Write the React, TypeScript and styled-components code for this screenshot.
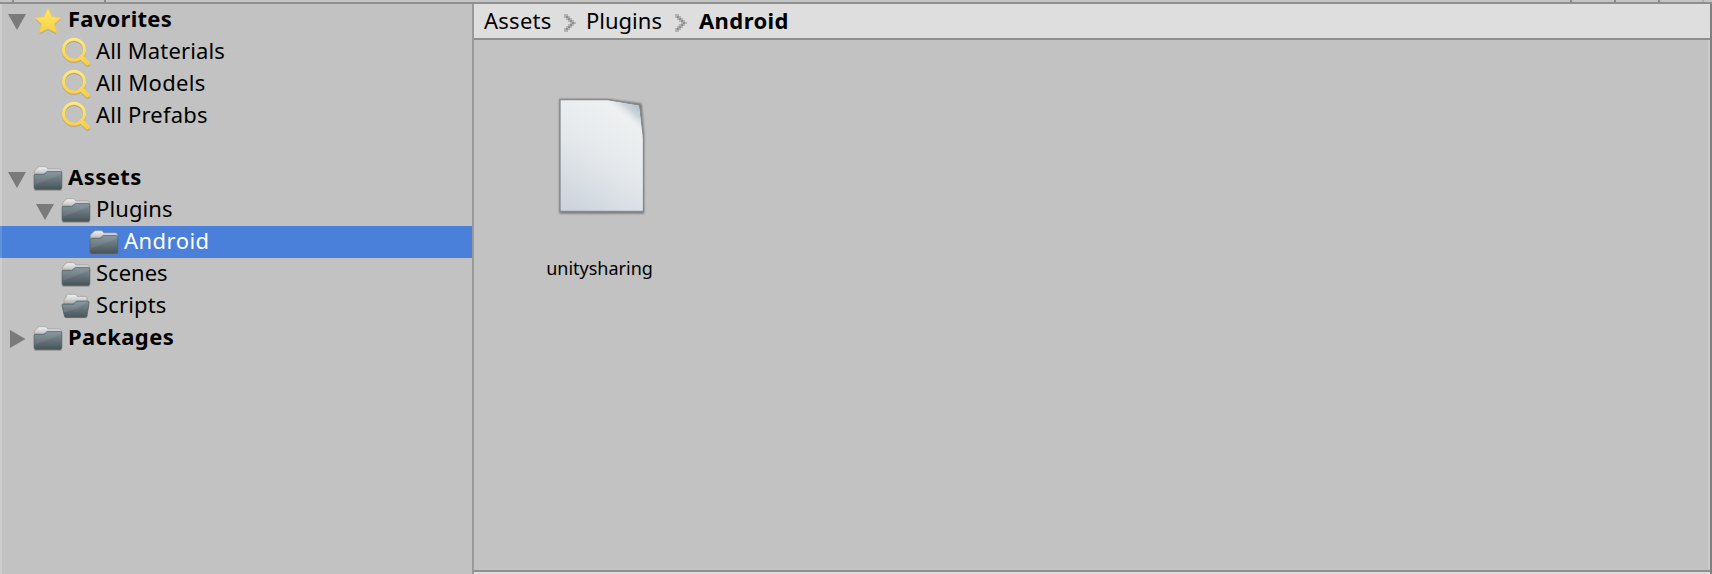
import React from "react";
import styled, { createGlobalStyle } from "styled-components";

const GlobalStyle = createGlobalStyle`
  * { box-sizing: border-box; }
  html, body { margin: 0; padding: 0; background: #c2c2c2; overflow: hidden; }
`;

const Window = styled.div`
  width: 1712px;
  height: 574px;
  display: flex;
  flex-direction: column;
  background: #c2c2c2;
  color: #000;
  font-family: "Noto Sans", "Open Sans", sans-serif;
  font-size: 22px;
`;

const ToolbarEdge = styled.div`
  flex: 0 0 4px;
  display: flex;
  border-bottom: 2px solid #8f8f8f;
  background: #c4c4c4;
`;

const Tick = styled.i<{ $gap: number; $color?: string }>`
  width: 2px;
  height: 2px;
  margin-left: ${(p) => p.$gap}px;
  background: ${(p) => p.$color ?? "#8a8a8a"};
`;

const Body = styled.div`
  flex: 1;
  min-height: 0;
  display: flex;
`;

const Sidebar = styled.nav`
  width: 474px;
  border-right: 2px solid #999;
  background: linear-gradient(to right, #cecece 2px, #c2c2c2 2px);
`;

const Row = styled.div<{ $depth: number; $selected?: boolean; $spaced?: boolean }>`
  height: 32px;
  display: flex;
  align-items: center;
  margin-top: ${(p) => (p.$spaced ? 30 : 0)}px;
  padding-left: ${(p) => 5 + p.$depth * 28}px;
  background: ${(p) =>
    p.$selected ? "linear-gradient(to right, #6392dd 2px, #4a80d9 2px)" : "transparent"};
  color: ${(p) => (p.$selected ? "#fff" : "#000")};
`;

const Slot = styled.span<{ $w: number }>`
  flex: 0 0 ${(p) => p.$w}px;
  height: 32px;
  display: block;
  svg { display: block; }
`;

const Label = styled.span<{ $bold?: boolean; $track?: number }>`
  line-height: 28px;
  height: 32px;
  white-space: nowrap;
  font-weight: ${(p) => (p.$bold ? 700 : 400)};
  letter-spacing: ${(p) => p.$track ?? 0}px;
`;

const Main = styled.main`
  flex: 1;
  display: flex;
  flex-direction: column;
`;

const Breadcrumbs = styled.header`
  flex: 0 0 36px;
  display: flex;
  padding-left: 10px;
  background: #dedede;
  border-bottom: 2px solid #8f8f8f;
`;

const Crumb = styled(Label)<{ $w: number }>`
  width: ${(p) => p.$w}px;
  line-height: 32px;
`;

const ChevronSlot = styled.span<{ $w: number }>`
  width: ${(p) => p.$w}px;
  padding-top: 10px;
  svg { display: block; }
`;

const Grid = styled.section`
  flex: 1;
  padding: 57px 0 0 44px;
  border-right: 2px solid #cacaca;
`;

const Asset = styled.figure`
  margin: 0;
  width: 164px;
  display: flex;
  flex-direction: column;
  align-items: center;
`;

const AssetName = styled.figcaption`
  margin-top: 38px;
  padding-right: 1px;
  font-size: 18px;
  line-height: 26px;
`;

const Footer = styled.footer`
  flex: 0 0 4px;
  border-top: 2px solid #8f8f8f;
  background: #dedede;
`;

const RightEdge = styled.div`
  width: 2px;
  background: #808080;
`;

const Arrow = ({ open }: { open: boolean }) => (
  <svg width="24" height="32">
    <path d={open ? "M3 10H21L12 26Z" : "M5 8V26L20.5 17Z"} fill="#7a7a7a" />
  </svg>
);

const Star = () => (
  <svg width="34" height="32" viewBox="-1 0 34 32">
    <defs>
      <linearGradient id="star" x2="0" y2="1">
        <stop offset="0" stopColor="#ffe870" />
        <stop offset="1" stopColor="#f9d03e" />
      </linearGradient>
    </defs>
    <path
      d="M14 4.8L18 13.2L27 14.2L20.3 20.5L22.5 29.5L14 25L5.3 29.5L7.5 20.5L1 14.2L10 13.2Z"
      fill="#777" opacity=".35" transform="translate(0 .9)"
    />
    <path
      d="M14 4L18 12.7L27.2 13.7L20.5 20L22.8 29L14 24.8L5.2 29L7.5 20L.8 13.7L10 12.7Z"
      fill="url(#star)" stroke="#efc84a" strokeWidth=".7" strokeLinejoin="round"
    />
  </svg>
);

const Magnifier = () => (
  <svg width="34" height="32" fill="none">
    <defs>
      <linearGradient id="glass" x1="0" y1="0" x2="0" y2="32" gradientUnits="userSpaceOnUse">
        <stop offset="0" stopColor="#ffeb85" />
        <stop offset="1" stopColor="#facb30" />
      </linearGradient>
    </defs>
    <g stroke="#8c7a40" opacity=".4" transform="translate(0 .8)">
      <circle cx="13" cy="14" r="10.5" strokeWidth="3.2" />
      <path d="M20.5 21.5L26.5 27.5" strokeWidth="5" strokeLinecap="round" />
    </g>
    <g stroke="url(#glass)">
      <circle cx="13" cy="13.7" r="10.5" strokeWidth="3" />
      <path d="M20.6 21.5L26.5 27.4" strokeWidth="4.6" strokeLinecap="round" />
    </g>
  </svg>
);

const Folder = ({ open = false }: { open?: boolean }) => (
  <svg width="34" height="32">
    <defs>
      <linearGradient id="folder" x2="0" y2="1">
        <stop offset="0" stopColor="#82929a" />
        <stop offset=".5" stopColor="#65737a" />
        <stop offset="1" stopColor="#48545a" />
      </linearGradient>
      <linearGradient id="tab" x2="0" y2="1">
        <stop offset="0" stopColor="#f4f4f4" />
        <stop offset=".5" stopColor="#d0d0d0" />
        <stop offset="1" stopColor="#9d9d9d" />
      </linearGradient>
    </defs>
    {open ? (
      <>
        <path
          d="M3 15V10Q3 8.5 4.5 8.3L6 5.2Q6.4 4.3 7.4 4.3H14Q15 4.3 15.5 5.2L16.3 6.4H24Q26 6.5 26 8V14Z"
          fill="url(#tab)" stroke="#999" strokeWidth=".7"
        />
        <path
          d="M2.6 14H12.5L15.5 11H26Q28.4 11 28.1 12.7L26 26Q25.8 27.6 24.3 27.6H5.2Q3.7 27.6 3.4 26L1 15.3Q.9 14 2.6 14Z"
          fill="url(#folder)" stroke="#505c62" strokeWidth=".7"
        />
        <path d="M2.2 15H12.9L15.9 12H27L15 19L3 22.2Z" fill="#fff" opacity=".09" />
      </>
    ) : (
      <g transform="translate(.4 .5)">
        <path d="M1 27.6H28.2" stroke="#777" opacity=".5" strokeWidth="1.6" />
        <path
          d="M1 14V9.3Q1 7.4 2.8 6.8L4.6 5Q5.3 4.2 6.5 4.2H11.7Q12.7 4.2 13.3 5L14.4 6.4H26Q28 6.4 28.2 8.4V13Z"
          fill="url(#tab)" stroke="#999" strokeWidth=".7"
        />
        <path
          d="M.7 13.3Q.7 11.8 2.2 11.8H10.5L13.9 8.9H27Q28.4 8.9 28.4 10.4V25.2Q28.4 27 26.6 27H2.5Q.7 27 .7 25.2Z"
          fill="url(#folder)" stroke="#505c62" strokeWidth=".7"
        />
        <path d="M1 12.8H11L14.3 9.8H28.1V12L1 22.5Z" fill="#fff" opacity=".07" />
      </g>
    )}
  </svg>
);

const Chevron = () => (
  <svg width="12" height="18" fill="none" shapeRendering="crispEdges">
    <path
      d="M0 0H4V2H6V4H8V6H10V8H12V10H10V12H8V14H6V16H4V18H0V14H2V12H4V10H6V8H4V6H2V4H0Z"
      fill="#b3b3b3"
    />
    <path d="M2 2H4V4H6V6H8V8H10V10H8V12H6V14H4V16H2V14H4V12H6V10H8V8H6V6H4V4H2Z" fill="#8f8f8f" />
  </svg>
);

const Page = () => (
  <svg width="92" height="120" viewBox="-1.5 0 92 120">
    <defs>
      <linearGradient id="paper" x1="70" y1="20" x2="10" y2="114" gradientUnits="userSpaceOnUse">
        <stop offset="0" stopColor="#eff1f2" />
        <stop offset=".45" stopColor="#e5e9ec" />
        <stop offset="1" stopColor="#ccd4dd" />
      </linearGradient>
      <linearGradient id="curl" x1="83" y1="8" x2="70" y2="23" gradientUnits="userSpaceOnUse">
        <stop offset="0" stopColor="#b3bfc8" />
        <stop offset=".45" stopColor="#ccd4da" />
        <stop offset="1" stopColor="#edf0f2" stopOpacity="0" />
      </linearGradient>
      <filter id="soft" x="-10%" y="-10%" width="120%" height="125%">
        <feGaussianBlur stdDeviation="1.3" />
      </filter>
    </defs>
    <path d="M4 8H54L86 12L88.5 44V122H4Z" transform="translate(0 -5.5)" fill="#555" opacity=".75" filter="url(#soft)" />
    <path d="M4.5 7.5H52L84 13.2L88 46V119.5H4.5Z" transform="translate(0 -5)" fill="url(#paper)" stroke="#868b8e" strokeWidth="1.3" />
    <path d="M50 3.2L83.4 8.8L87.2 40Q80 25 50 3.2Z" fill="url(#curl)" />
  </svg>
);

type Item = {
  name: string;
  depth: number;
  icon: "star" | "search" | "folder" | "openFolder";
  arrow?: "open" | "closed";
  bold?: boolean;
  selected?: boolean;
  spaced?: boolean;
  track?: number;
};

const items: Item[] = [
  { name: "Favorites", depth: 0, icon: "star", arrow: "open", bold: true, track: 0.25 },
  { name: "All Materials", depth: 1, icon: "search", track: 0.15 },
  { name: "All Models", depth: 1, icon: "search", track: 0.3 },
  { name: "All Prefabs", depth: 1, icon: "search", track: 0.2 },
  { name: "Assets", depth: 0, icon: "folder", arrow: "open", bold: true, spaced: true, track: 0.45 },
  { name: "Plugins", depth: 1, icon: "folder", arrow: "open", track: 0.1 },
  { name: "Android", depth: 2, icon: "folder", selected: true, track: 0.45 },
  { name: "Scenes", depth: 1, icon: "folder" },
  { name: "Scripts", depth: 1, icon: "openFolder", track: 0.15 },
  { name: "Packages", depth: 0, icon: "folder", arrow: "closed", bold: true, track: 0.37 },
];

const icons = {
  star: <Star />,
  search: <Magnifier />,
  folder: <Folder />,
  openFolder: <Folder open />,
};

export default function App() {
  return (
    <Window>
      <GlobalStyle />
      <ToolbarEdge>
        <Tick $gap={12} />
        <Tick $gap={90} />
        <Tick $gap={1464} />
        <Tick $gap={42} />
        <Tick $gap={42} />
        <Tick $gap={42} $color="#adadad" />
      </ToolbarEdge>
      <Body>
        <Sidebar>
          {items.map((it) => (
            <Row key={it.name} $depth={it.depth} $selected={it.selected} $spaced={it.spaced}>
              <Slot $w={28}>{it.arrow && <Arrow open={it.arrow === "open"} />}</Slot>
              <Slot $w={35}>{icons[it.icon]}</Slot>
              <Label $bold={it.bold} $track={it.track}>{it.name}</Label>
            </Row>
          ))}
        </Sidebar>
        <Main>
          <Breadcrumbs>
            <Crumb $w={80} $track={0.25}>Assets</Crumb>
            <ChevronSlot $w={22}><Chevron /></ChevronSlot>
            <Crumb $w={89}>Plugins</Crumb>
            <ChevronSlot $w={24}><Chevron /></ChevronSlot>
            <Crumb $w={100} $bold $track={0.4}>Android</Crumb>
          </Breadcrumbs>
          <Grid>
            <Asset>
              <Page />
              <AssetName>unitysharing</AssetName>
            </Asset>
          </Grid>
          <Footer />
        </Main>
        <RightEdge />
      </Body>
    </Window>
  );
}
